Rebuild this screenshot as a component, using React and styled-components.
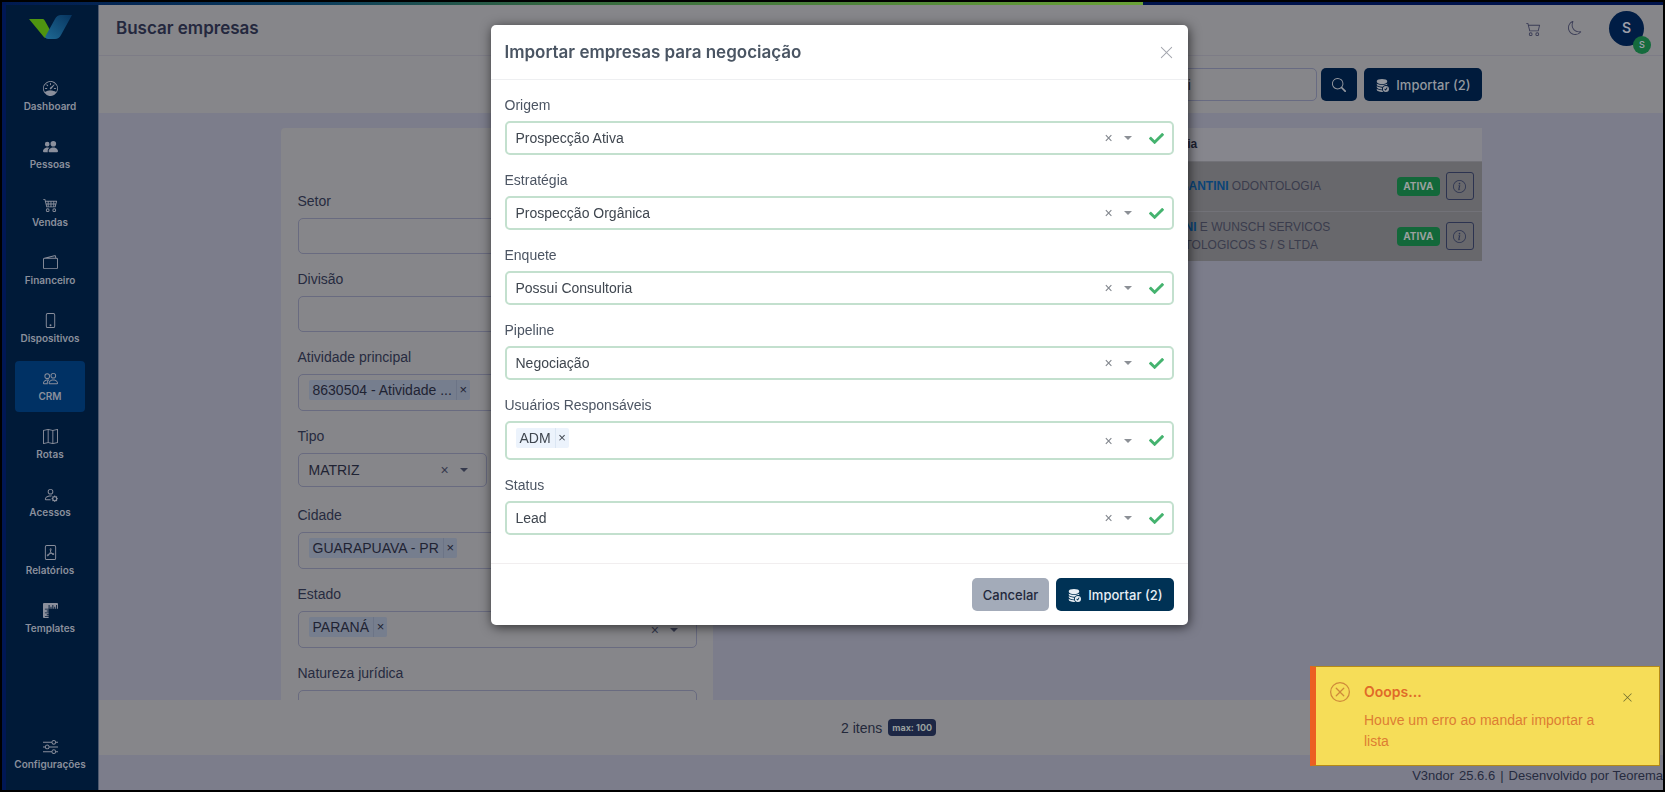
import React from 'react';
import styled, { createGlobalStyle } from 'styled-components';
import {
  BsSpeedometer,
  BsPeopleFill,
  BsCart4,
  BsWallet2,
  BsPhone,
  BsPeople,
  BsMap,
  BsPersonGear,
  BsFilePdf,
  BsRulers,
  BsSliders,
  BsCart2,
  BsMoon,
  BsSearch,
  BsDatabaseFillCheck,
  BsInfoCircle,
  BsXLg,
  BsXCircle,
} from 'react-icons/bs';
import { FaCheck } from 'react-icons/fa';

const headingFont = "Inter, 'Liberation Sans', sans-serif";

const GlobalStyle = createGlobalStyle`
  * {
    box-sizing: border-box;
  }

  body {
    margin: 0;
    background: #000;
    color: #23283a;
    font-family: 'Liberation Sans', Arial, sans-serif;
    font-size: 14px;
    line-height: 20px;
  }

  button, input, select {
    font: inherit;
    color: inherit;
  }

  button {
    cursor: pointer;
  }
`;

const Frame = styled.div`
  height: 100vh;
  padding: 2px;
  background: #000;
`;

const Page = styled.div`
  height: 100%;
  display: flex;
  flex-direction: column;
  border-left: 4px solid #001754;
  background: #7c7d8b;
  overflow: hidden;
`;

const TopStrip = styled.div`
  flex: none;
  height: 3px;
  background: linear-gradient(90deg, #001a50 0%, #0c3d5c 19%, #33663f 33%, #6aa237 68.6%, #00134c 68.6%);
`;

const Shell = styled.div`
  flex: 1;
  min-height: 0;
  display: flex;
`;

const Sidebar = styled.aside`
  flex: none;
  width: 93px;
  padding: 10px 13px 10px 9px;
  display: flex;
  flex-direction: column;
  justify-content: space-between;
  background: #001a38;
  border-right: 1px solid #4d586d;
`;

const Logo = styled.svg`
  display: block;
  width: 43px;
  height: 24px;
  margin: 0 auto 32px;
`;

const NavList = styled.nav`
  display: flex;
  flex-direction: column;
  gap: 7px;
`;

const NavItem = styled.a`
  height: 51px;
  display: flex;
  flex-direction: column;
  align-items: center;
  justify-content: center;
  gap: 3px;
  border-radius: 4px;
  color: #8a8f9c;
  font-family: ${headingFont};
  font-size: 10px;
  font-weight: 600;
  line-height: 14px;
  text-decoration: none;
  background: ${(props) => (props.$active ? '#003164' : 'transparent')};

  svg {
    width: 15px;
    height: 15px;
  }
`;

const Main = styled.div`
  flex: 1;
  min-width: 0;
  display: flex;
  flex-direction: column;
`;

const Header = styled.header`
  flex: none;
  height: 51px;
  padding: 0 19px 4px 17px;
  display: flex;
  align-items: center;
  justify-content: space-between;
  background: #86868a;
  border-bottom: 1px solid #7d7c86;
`;

const PageTitle = styled.h1`
  margin: 0;
  font-family: ${headingFont};
  font-size: 17px;
  font-weight: 600;
  color: #24283e;
`;

const HeaderActions = styled.div`
  display: flex;
  align-items: center;
  gap: 27px;
`;

const IconButton = styled.button`
  display: flex;
  padding: 0;
  border: none;
  background: none;
  color: ${(props) => props.$color || '#3a3c56'};

  svg {
    width: ${(props) => props.$size || 15}px;
    height: ${(props) => props.$size || 15}px;
  }
`;

const Avatar = styled.button`
  position: relative;
  width: 35px;
  height: 35px;
  padding: 0;
  border: none;
  border-radius: 50%;
  background: #001d45;
  color: #9c9ea8;
  font-family: ${headingFont};
  font-weight: 600;
`;

const AvatarBadge = styled.span`
  position: absolute;
  right: -7px;
  bottom: -8px;
  width: 18px;
  height: 18px;
  border-radius: 50%;
  background: #156b3d;
  font-size: 9px;
  line-height: 18px;
`;

const Container = styled.div`
  width: 100%;
  max-width: 1201px;
  margin: 0 auto;
`;

const Toolbar = styled.div`
  flex: none;
  padding: 12px 0;
  background: #86868a;
`;

const ToolbarRow = styled(Container)`
  display: flex;
  justify-content: flex-end;
  gap: 7px;
`;

const SearchGroup = styled.form`
  display: flex;
  gap: 4px;
`;

const SearchInput = styled.input`
  width: 184px;
  height: 33px;
  padding: 0 16px;
  border: 1px solid #686b82;
  border-radius: 5px;
  background: transparent;
  outline: none;
`;

const Button = styled.button`
  height: 33px;
  padding: 0 11px;
  display: flex;
  align-items: center;
  gap: 7px;
  border: none;
  border-radius: 5px;
  font-family: ${headingFont};
  font-size: 13px;
  font-weight: 500;
  white-space: nowrap;
  color: ${(props) => (props.$variant === 'secondary' ? '#22283c' : props.$variant === 'dim' ? '#94989f' : '#e8eef4')};
  background: ${(props) => (props.$variant === 'secondary' ? '#a3abb9' : props.$variant === 'dim' ? '#001b3c' : '#003255')};

  svg {
    width: 14px;
    height: 14px;
  }
`;

const Content = styled.main`
  flex: 1;
  min-height: 0;
  padding-top: 15px;
  overflow: hidden;
`;

const Columns = styled(Container)`
  display: flex;
  align-items: flex-start;
  gap: 30px;
`;

const FilterCard = styled.section`
  flex: none;
  width: 36%;
  padding: 63px 16px 17px 17px;
  border-radius: 4px;
  background: #86868a;
`;

const FilterGrid = styled.form`
  display: grid;
  grid-template-columns: 1fr 1fr;
  gap: 15px 21px;
`;

const Field = styled.div`
  display: flex;
  flex-direction: column;
  gap: ${(props) => (props.$dim ? 7 : 6)}px;
  grid-column: ${(props) => (props.$half ? 'auto' : '1 / -1')};
  min-height: ${(props) => (props.$dim && props.$filled ? '64px' : '0')};

  label {
    color: ${(props) => (props.$dim ? '#262b40' : '#4c5563')};
  }
`;

const Control = styled.div`
  height: ${(props) => props.$height}px;
  padding: 0 ${(props) => (props.$dim ? 18 : 8)}px 0 ${(props) => (props.$dim ? 10 : 9)}px;
  display: flex;
  align-items: center;
  border: ${(props) => (props.$dim ? '1px solid #696b80' : '2px solid #c3e0ce')};
  border-radius: 5px;
  color: ${(props) => (props.$dim ? '#1f2333' : '#3f464f')};

  select,
  input {
    flex: 1;
    min-width: 0;
    height: 100%;
    padding: 0;
    border: none;
    outline: none;
    appearance: none;
    background: transparent;
  }
`;

const Tag = styled.span`
  display: flex;
  align-items: center;
  height: 20px;
  padding-left: 4px;
  border-radius: 2px;
  align-self: flex-start;
  margin-top: 5px;
  white-space: nowrap;
  background: ${(props) => (props.$dim ? '#767e8e' : '#ecf3fc')};

  button {
    width: 14px;
    height: 20px;
    margin-left: 4px;
    padding: 0;
    border: none;
    border-left: 1px solid ${(props) => (props.$dim ? '#6c7486' : '#dbe6f3')};
    background: none;
    font-size: 13px;
    line-height: 18px;
  }
`;

const Clear = styled.button`
  width: 12px;
  padding: 0;
  border: none;
  background: none;
  color: ${(props) => (props.$dim ? '#35394d' : '#80858c')};
`;

const Caret = styled.span`
  width: 0;
  height: 0;
  margin-left: 9px;
  border: 4px solid transparent;
  border-top-color: ${(props) => (props.$dim ? '#35394d' : '#8c9096')};
  border-bottom: 0;
`;

const Valid = styled(FaCheck)`
  width: 15px;
  height: 15px;
  margin-left: 17px;
  color: #45b36f;
`;

const Table = styled.table`
  flex: 1;
  border-collapse: collapse;
  table-layout: fixed;
  background: #86868d;
  color: #3a3c4c;
  font-size: 12px;
  line-height: 18px;

  th {
    height: 33px;
    padding: 0;
    text-align: left;
    color: #1c2030;
  }

  td {
    height: 50px;
    padding: 0;
    background: #68686c;
    border-top: 1px solid #727278;
  }

  mark {
    background: none;
    color: #0a4478;
    font-weight: 700;
  }
`;

const RowActions = styled.div`
  display: flex;
  align-items: center;
  justify-content: flex-end;
  gap: 6px;
  padding-right: 8px;
`;

const Badge = styled.span`
  height: ${(props) => (props.$small ? 17 : 19)}px;
  padding: 0 ${(props) => (props.$small ? 4 : 6)}px;
  border-radius: 4px;
  background: ${(props) => props.$color};
  color: #9aa09f;
  font-family: ${headingFont};
  font-size: ${(props) => (props.$small ? 9 : 10)}px;
  font-weight: 700;
  line-height: ${(props) => (props.$small ? 17 : 19)}px;
`;

const InfoButton = styled.button`
  width: 28px;
  height: 28px;
  padding: 0;
  display: flex;
  align-items: center;
  justify-content: center;
  border: 1px solid #2c3350;
  border-radius: 3px;
  background: none;
  color: #2c3350;
`;

const SummaryBar = styled.div`
  flex: none;
  height: 55px;
  display: flex;
  align-items: center;
  justify-content: center;
  gap: 6px;
  padding-left: 15px;
  background: #86868a;
`;

const Footer = styled.footer`
  flex: none;
  height: 35px;
  padding-top: 11px;
  display: flex;
  justify-content: flex-end;
  gap: 5px;
  font-size: 13px;
  color: #262b3f;
  white-space: nowrap;
`;

const Overlay = styled.div`
  position: fixed;
  inset: 5px 2px 2px 15px;
  padding: 20px;
  display: flex;
  justify-content: center;
  align-items: flex-start;
`;

const Modal = styled.div`
  width: 100%;
  max-width: 697px;
  background: #fff;
  border-radius: 5px;
  box-shadow: 1px 2px 12px rgba(0, 0, 0, 0.65);
`;

const ModalHeader = styled.div`
  height: 55px;
  padding: 0 14px;
  display: flex;
  align-items: center;
  justify-content: space-between;
  border-bottom: 1px solid #eeeff1;

  h2 {
    margin: 0;
    font-family: ${headingFont};
    font-size: 17px;
    font-weight: 600;
    color: #4a5563;
  }
`;

const ModalBody = styled.form`
  padding: 15px 14px 28px;
  display: flex;
  flex-direction: column;
  gap: 15px;
`;

const ModalFooter = styled.div`
  padding: 14px;
  display: flex;
  justify-content: flex-end;
  gap: 7px;
  border-top: 1px solid #f1eeef;
`;

const Toast = styled.div`
  position: fixed;
  right: 5px;
  bottom: 26px;
  width: 350px;
  padding: 15px 26px 13px 14px;
  display: flex;
  align-items: flex-start;
  gap: 14px;
  border: 1px solid #b58a16;
  border-left: 6px solid #ec5f22;
  background: #f6dd58;
  color: #dd7d33;

  > svg {
    flex: none;
    width: 20px;
    height: 20px;
    color: #cf8a3a;
  }

  button {
    align-self: flex-start;
    margin-top: 10px;
  }
`;

const ToastText = styled.div`
  flex: 1;

  strong {
    display: block;
    font-family: ${headingFont};
    font-weight: 600;
    color: #e06a28;
  }

  p {
    margin: 8px 0 0;
    line-height: 21px;
  }
`;

const navItems = [
  { label: 'Dashboard', icon: BsSpeedometer },
  { label: 'Pessoas', icon: BsPeopleFill },
  { label: 'Vendas', icon: BsCart4 },
  { label: 'Financeiro', icon: BsWallet2 },
  { label: 'Dispositivos', icon: BsPhone },
  { label: 'CRM', icon: BsPeople, active: true },
  { label: 'Rotas', icon: BsMap },
  { label: 'Acessos', icon: BsPersonGear },
  { label: 'Relatórios', icon: BsFilePdf },
  { label: 'Templates', icon: BsRulers },
];

const filters = [
  { id: 'setor', label: 'Setor' },
  { id: 'divisao', label: 'Divisão' },
  { id: 'atividade', label: 'Atividade principal', tag: '8630504 - Atividade ...' },
  { id: 'tipo', label: 'Tipo', value: 'MATRIZ', half: true },
  { id: 'cidade', label: 'Cidade', tag: 'GUARAPUAVA - PR' },
  { id: 'estado', label: 'Estado', tag: 'PARANÁ' },
  { id: 'natureza', label: 'Natureza jurídica' },
];

const importFields = [
  { id: 'origem', label: 'Origem', value: 'Prospecção Ativa' },
  { id: 'estrategia', label: 'Estratégia', value: 'Prospecção Orgânica' },
  { id: 'enquete', label: 'Enquete', value: 'Possui Consultoria' },
  { id: 'pipeline', label: 'Pipeline', value: 'Negociação' },
  { id: 'usuarios', label: 'Usuários Responsáveis', tag: 'ADM' },
  { id: 'status', label: 'Status', value: 'Lead' },
];

const SelectField = ({ id, label, value, tag, half, dim }) => {
  const filled = Boolean(value || tag);
  const emptyHeight = dim ? 36 : 34;
  const height = tag ? (dim ? 37 : 39) : value ? 34 : emptyHeight;

  return (
    <Field $dim={dim} $half={half} $filled={filled}>
      <label htmlFor={id}>{label}</label>
      <Control $dim={dim} $height={height}>
        {tag && (
          <Tag $dim={dim}>
            {tag}
            <button type="button" aria-label={`Remover ${tag}`}>×</button>
          </Tag>
        )}
        {value ? (
          <select id={id} defaultValue={value}>
            <option>{value}</option>
          </select>
        ) : (
          <input id={id} type="text" />
        )}
        {filled && (
          <>
            <Clear type="button" $dim={dim} aria-label={`Limpar ${label}`}>×</Clear>
            <Caret $dim={dim} />
          </>
        )}
        {!dim && <Valid />}
      </Control>
    </Field>
  );
};

const Actions = () => (
  <RowActions>
    <Badge $color="#13683a">ATIVA</Badge>
    <InfoButton aria-label="Detalhes">
      <BsInfoCircle size={13} />
    </InfoButton>
  </RowActions>
);

const SideMenu = () => (
  <Sidebar>
    <div>
      <Logo viewBox="0 0 43 24" aria-label="V3ndor">
        <defs>
          <linearGradient id="logoBlue" x1="0" y1="1" x2="1" y2="0">
            <stop offset="0" stopColor="#1f6a94" />
            <stop offset="1" stopColor="#07345f" />
          </linearGradient>
        </defs>
        <path d="M0 4h14q1 0 2 2l5 9-4 8q-2 0-3-2z" fill="#4f9410" />
        <path d="M16 22l10-18q2-4 6-4h11L32 20q-2 4-6 4h-7q-2 0-3-2z" fill="url(#logoBlue)" />
      </Logo>
      <NavList>
        {navItems.map(({ label, icon: Icon, active }) => (
          <NavItem key={label} href="#" $active={active}>
            <Icon />
            {label}
          </NavItem>
        ))}
      </NavList>
    </div>
    <NavItem href="#">
      <BsSliders />
      Configurações
    </NavItem>
  </Sidebar>
);

const ImportModal = () => (
  <Overlay>
    <Modal role="dialog" aria-labelledby="modal-title">
      <ModalHeader>
        <h2 id="modal-title">Importar empresas para negociação</h2>
        <IconButton $color="#a4a6ae" aria-label="Fechar">
          <BsXLg />
        </IconButton>
      </ModalHeader>
      <ModalBody>
        {importFields.map((field) => (
          <SelectField key={field.id} {...field} />
        ))}
      </ModalBody>
      <ModalFooter>
        <Button $variant="secondary">Cancelar</Button>
        <Button>
          <BsDatabaseFillCheck />
          Importar (2)
        </Button>
      </ModalFooter>
    </Modal>
  </Overlay>
);

const App = () => {
  return (
    <Frame>
      <GlobalStyle />
      <Page>
        <TopStrip />
        <Shell>
          <SideMenu />
          <Main>
            <Header>
              <PageTitle>Buscar empresas</PageTitle>
              <HeaderActions>
                <IconButton aria-label="Carrinho">
                  <BsCart2 />
                </IconButton>
                <IconButton aria-label="Tema escuro" $size={14}>
                  <BsMoon />
                </IconButton>
                <Avatar>
                  S<AvatarBadge>S</AvatarBadge>
                </Avatar>
              </HeaderActions>
            </Header>
            <Toolbar>
              <ToolbarRow>
                <SearchGroup>
                  <SearchInput aria-label="Buscar" defaultValue="santini" />
                  <Button type="button" $variant="dim" aria-label="Pesquisar">
                    <BsSearch />
                  </Button>
                </SearchGroup>
                <Button $variant="dim">
                  <BsDatabaseFillCheck />
                  Importar (2)
                </Button>
              </ToolbarRow>
            </Toolbar>
            <Content>
              <Columns>
                <FilterCard>
                  <FilterGrid>
                    {filters.map((field) => (
                      <SelectField key={field.id} dim {...field} />
                    ))}
                  </FilterGrid>
                </FilterCard>
                <Table>
                  <colgroup>
                    <col />
                    <col width="190" />
                    <col width="143" />
                  </colgroup>
                  <thead>
                    <tr>
                      <th />
                      <th>Fantasia</th>
                      <th />
                    </tr>
                  </thead>
                  <tbody>
                    <tr>
                      <td />
                      <td>
                        DRA. <mark>SANTINI</mark> ODONTOLOGIA
                      </td>
                      <td>
                        <Actions />
                      </td>
                    </tr>
                    <tr>
                      <td />
                      <td>
                        <mark>SANTINI</mark> E WUNSCH SERVICOS ODONTOLOGICOS S / S LTDA
                      </td>
                      <td>
                        <Actions />
                      </td>
                    </tr>
                  </tbody>
                </Table>
              </Columns>
            </Content>
            <SummaryBar>
              2 itens
              <Badge $small $color="#1d2745">max: 100</Badge>
            </SummaryBar>
            <Footer>
              <span>V3ndor</span>
              <span>25.6.6</span>
              <span>|</span>
              <span>Desenvolvido por Teorema</span>
            </Footer>
          </Main>
        </Shell>
      </Page>
      <ImportModal />
      <Toast role="alert">
        <BsXCircle />
        <ToastText>
          <strong>Ooops...</strong>
          <p>Houve um erro ao mandar importar a lista</p>
        </ToastText>
        <IconButton $color="#6b6a2e" $size={11} aria-label="Fechar aviso">
          <BsXLg />
        </IconButton>
      </Toast>
    </Frame>
  );
};

export default App;
